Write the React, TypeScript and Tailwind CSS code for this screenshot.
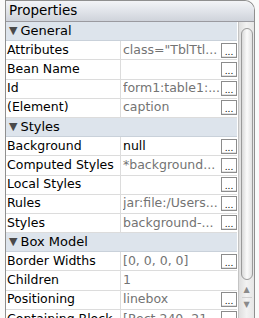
import React from "react";

type Row = { label: string; value?: string; dark?: boolean; btn?: boolean };
type Section = { title: string; rows: Row[] };

const sections: Section[] = [
  {
    title: "General",
    rows: [
      { label: "Attributes", value: 'class="TblTtl...', btn: true },
      { label: "Bean Name", value: "", btn: true },
      { label: "Id", value: "form1:table1:...", btn: true },
      { label: "(Element)", value: "caption", btn: true },
    ],
  },
  {
    title: "Styles",
    rows: [
      { label: "Background", value: "null", dark: true, btn: true },
      { label: "Computed Styles", value: "*background...", btn: true },
      { label: "Local Styles", value: "", btn: true },
      { label: "Rules", value: "jar:file:/Users...", btn: true },
      { label: "Styles", value: "background-...", btn: true },
    ],
  },
  {
    title: "Box Model",
    rows: [
      { label: "Border Widths", value: "[0, 0, 0, 0]", btn: true },
      { label: "Children", value: "1" },
      { label: "Positioning", value: "linebox", btn: true },
      { label: "Containing Block", value: "[Rect 240, 21...", btn: true },
    ],
  },
];

const DotsButton = () => (
  <div className="w-[16px] h-[15px] border border-[#8c8c8c] bg-white flex items-end justify-center shadow-[inset_0_-1px_0_#e2e2e2]">
    <span className="text-[9px] leading-[10px] text-black">...</span>
  </div>
);

const App = () => {
  return (
    <div
      className="w-[259px] h-[318px] overflow-hidden bg-[#fafafa] text-[12.5px] text-black"
      style={{ fontFamily: '"DejaVu Sans", "Liberation Sans", sans-serif' }}
    >
      <div className="ml-[5px] mr-[4px] h-full border-l border-r border-t border-[#8f8f8f] rounded-tr-[10px] bg-white flex flex-col overflow-hidden">
        {/* Title bar */}
        <div className="h-[21px] shrink-0 border-b border-[#9a9aa0] bg-gradient-to-b from-[#f3f4f7] via-[#e1e4ea] to-[#cfd3db] rounded-tr-[9px] flex items-center pl-[3px]">
          <span className="text-[13.5px] leading-none">Properties</span>
        </div>

        <div className="flex flex-1 min-h-0">
          {/* Sheet */}
          <div className="flex-1 min-w-0">
            {sections.map((s) => (
              <div key={s.title}>
                <div className="h-[19.2px] bg-[#dde4ec] border-b border-[#c9d1da] flex items-center pl-[3px]">
                  <span className="text-[#4a4a4a] text-[11px] mr-[3px]">▼</span>
                  <span className="text-[13px]">{s.title}</span>
                </div>
                {s.rows.map((r) => (
                  <div key={s.title + r.label} className="h-[19.2px] flex border-b border-[#dcdcdc]">
                    <div className="w-[115px] shrink-0 border-r border-[#dcdcdc] flex items-center pl-[1px] whitespace-nowrap overflow-hidden">
                      {r.label}
                    </div>
                    <div className="flex-1 min-w-0 flex items-center justify-between pl-[2px]">
                      <span className={`whitespace-nowrap overflow-hidden ${r.dark ? "text-black" : "text-[#737373]"}`}>
                        {r.value}
                      </span>
                      {r.btn && <DotsButton />}
                    </div>
                  </div>
                ))}
              </div>
            ))}
          </div>

          {/* Scrollbar */}
          <div className="w-[16px] shrink-0 ml-[1px] bg-gradient-to-r from-[#dedede] via-[#f2f2f2] to-[#e6e6e6] border-l border-[#c4c4c4] flex flex-col items-center pt-[6px]">
            <div className="w-[12px] h-[252px] rounded-full border border-[#9a9a9a] bg-gradient-to-r from-[#d9d9d9] via-[#fbfbfb] to-[#e2e2e2]" />
            <div className="mt-[3px] w-full flex flex-col items-center">
              <span className="text-[8px] leading-[14px] text-[#8a8a8a]">▲</span>
              <div className="w-[10px] border-t border-[#cfcfcf]" />
              <span className="text-[8px] leading-[14px] text-[#8a8a8a]">▼</span>
            </div>
          </div>
        </div>
      </div>
    </div>
  );
};

export default App;
